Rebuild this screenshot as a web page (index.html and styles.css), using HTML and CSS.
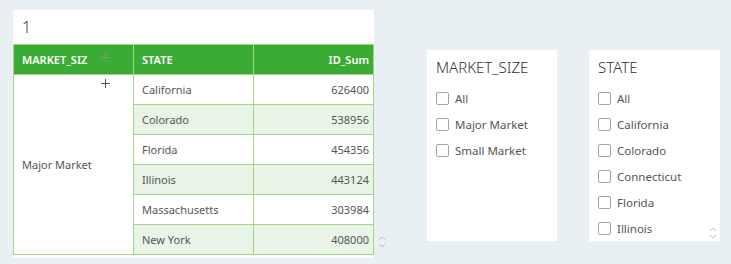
FILE: index.html
```html
<!DOCTYPE html>
<html lang="en">
<head>
    <meta charset="UTF-8">
    <title>Market Report</title>
    <link rel="stylesheet" href="styles.css">
</head>
<body>
    <div class="page">
        <div class="card">
            <div class="card-title">1</div>
            <table class="grid">
                <thead>
                    <tr>
                        <th class="col-market">MARKET_SIZ<svg class="plus plus-head" width="9" height="9" viewBox="0 0 9 9"><path d="M4.5 0 V9 M0 4.5 H9" stroke="#749f70" stroke-width="1"/></svg></th>
                        <th>STATE</th>
                        <th class="num">ID_Sum</th>
                    </tr>
                </thead>
                <tbody>
                    <tr>
                        <td class="market" rowspan="6"><svg class="plus plus-row" width="9" height="9" viewBox="0 0 9 9"><path d="M4.5 0 V9 M0 4.5 H9" stroke="#555" stroke-width="1"/></svg>Major Market</td>
                        <td>California</td>
                        <td class="num">626400</td>
                    </tr>
                    <tr class="alt"><td>Colorado</td><td class="num">538956</td></tr>
                    <tr><td>Florida</td><td class="num">454356</td></tr>
                    <tr class="alt"><td>Illinois</td><td class="num">443124</td></tr>
                    <tr><td>Massachusetts</td><td class="num">303984</td></tr>
                    <tr class="alt"><td>New York</td><td class="num">408000</td></tr>
                </tbody>
            </table>
        </div>
        <div class="scroller table-scroll">
            <svg width="8" height="12" viewBox="0 0 8 12"><path d="M1 4 L4 1 L7 4 M1 8 L4 11 L7 8" fill="none" stroke="#b9c0c4" stroke-width="1"/></svg>
        </div>

        <div class="slicer">
            <div class="slicer-title">MARKET_SIZE</div>
            <label class="item"><span class="box"></span>All</label>
            <label class="item"><span class="box"></span>Major Market</label>
            <label class="item"><span class="box"></span>Small Market</label>
        </div>

        <div class="slicer slicer-state">
            <div class="slicer-title">STATE</div>
            <label class="item"><span class="box"></span>All</label>
            <label class="item"><span class="box"></span>California</label>
            <label class="item"><span class="box"></span>Colorado</label>
            <label class="item"><span class="box"></span>Connecticut</label>
            <label class="item"><span class="box"></span>Florida</label>
            <label class="item"><span class="box"></span>Illinois</label>
            <div class="scroller slicer-scroll">
                <svg width="8" height="12" viewBox="0 0 8 12"><path d="M1 4 L4 1 L7 4 M1 8 L4 11 L7 8" fill="none" stroke="#b9c0c4" stroke-width="1"/></svg>
            </div>
        </div>
    </div>
</body>
</html>
```

FILE: styles.css
```css
body {
    margin: 0;
    background: #e9f0f4;
    font-family: "Noto Sans", "Open Sans", sans-serif;
    color: #555;
    width: 731px;
    height: 264px;
    overflow: hidden;
}

.page {
    display: flex;
    align-items: flex-start;
    padding: 10px 0 0 13px;
}

.card {
    background: #fff;
    width: 361px;
    padding-bottom: 3px;
}

.card-title {
    height: 34px;
    padding-left: 9px;
    font-size: 16px;
    font-weight: 300;
    line-height: 34px;
    color: #333;
}

.grid {
    border-collapse: collapse;
    width: 361px;
    table-layout: fixed;
    font-size: 11px;
}

.grid th,
.grid td {
    border: 1px solid #a6d48b;
    height: 29px;
    padding: 0 4px 0 8px;
    text-align: left;
    white-space: nowrap;
    overflow: hidden;
}

.grid th {
    background: #3aac36;
    color: #fff;
    font-weight: 600;
    position: relative;
}

.grid .num {
    text-align: right;
}

.grid tr.alt td {
    background: #e8f5e6;
}

.grid td.market {
    background: #fff;
    position: relative;
}

.plus {
    position: absolute;
    left: 87px;
}

.plus-head {
    top: 8px;
}

.plus-row {
    top: 4px;
}

.scroller {
    display: flex;
}

.table-scroll {
    margin: 226px 0 0 4px;
}

.slicer {
    background: #fff;
    width: 121px;
    height: 184px;
    margin: 40px 0 0 41px;
    padding: 7px 0 0 9px;
    position: relative;
}

.slicer-state {
    width: 122px;
    margin-left: 32px;
}

.slicer-title {
    font-size: 15px;
    font-weight: 300;
    color: #333;
    height: 28px;
    line-height: 20px;
}

.item {
    display: flex;
    align-items: center;
    height: 26px;
    font-size: 11.5px;
    color: #555;
}

.box {
    width: 11px;
    height: 11px;
    border: 1px solid #a3a3a3;
    border-radius: 2px;
    margin-right: 6px;
}

.slicer-scroll {
    position: absolute;
    right: 3px;
    bottom: 2px;
}
```
